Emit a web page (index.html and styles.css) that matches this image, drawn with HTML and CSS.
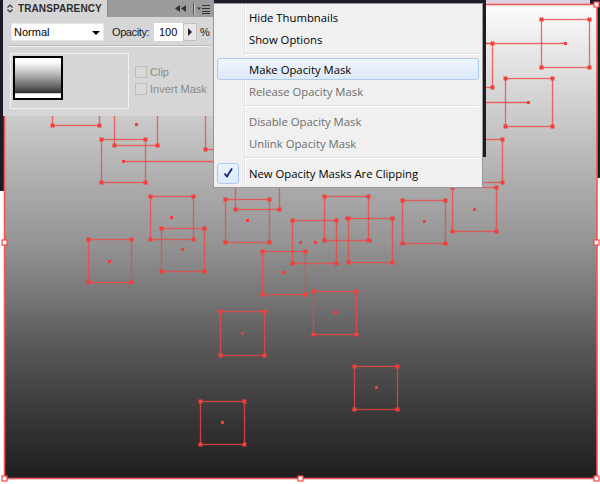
FILE: index.html
```html
<!DOCTYPE html>
<html>
<head>
<meta charset="utf-8">
<link rel="stylesheet" href="styles.css">
</head>
<body>
<div class="screen">
  <svg class="canvas" width="600" height="484" viewBox="0 0 600 484" xmlns="http://www.w3.org/2000/svg">
    <defs>
      <linearGradient id="art" x1="0" y1="0" x2="0" y2="1">
        <stop offset="0" stop-color="#fcfcfc"/>
        <stop offset="0.26" stop-color="#c6c6c6"/>
        <stop offset="0.39" stop-color="#aaaaaa"/>
        <stop offset="0.5" stop-color="#959595"/>
        <stop offset="0.63" stop-color="#737272"/>
        <stop offset="0.73" stop-color="#575555"/>
        <stop offset="0.88" stop-color="#363434"/>
        <stop offset="1" stop-color="#1f1d1e"/>
      </linearGradient>
      <rect id="h" x="-2" y="-2" width="4" height="4"/>
      <rect id="d" x="-1.5" y="-1.5" width="3" height="3"/>
      <rect id="bh" x="-2.5" y="-2.5" width="5" height="5"/>
    </defs>
    <rect x="0" y="0" width="600" height="4" fill="#1d1b28"/>
    <rect x="484" y="0" width="106" height="4" fill="#ddd2e4"/>
    <rect x="0" y="0" width="4" height="191" fill="#1d1b28"/>
    <rect x="597" y="0" width="3" height="178" fill="#1d1b28"/>
    <rect x="4" y="4" width="593" height="475" fill="url(#art)"/>
    <rect x="4.5" y="4.5" width="592.5" height="474" fill="none" stroke="#f35656" stroke-width="1.6"/>
    <g class="selbox">
      <rect x="541.5" y="19.5" width="48" height="48"/>
      <rect x="448.5" y="43.5" width="44" height="44"/>
      <rect x="505.5" y="78.5" width="47" height="48"/>
      <rect x="458.5" y="139.5" width="44" height="43"/>
      <rect x="452.5" y="187.5" width="44" height="44"/>
      <rect x="402.5" y="200.5" width="43" height="43"/>
      <rect x="52.5" y="81.5" width="47" height="44"/>
      <rect x="114.5" y="101.5" width="43" height="44"/>
      <rect x="101.5" y="139.5" width="44" height="43"/>
      <rect x="205.5" y="105.5" width="44" height="44"/>
      <rect x="150.5" y="196.5" width="43" height="43"/>
      <rect x="161.5" y="228.5" width="43" height="43"/>
      <rect x="88.5" y="239.5" width="43" height="43"/>
      <rect x="225.5" y="199.5" width="44" height="43"/>
      <rect x="235.5" y="165.5" width="44" height="44"/>
      <rect x="292.5" y="220.5" width="44" height="43"/>
      <rect x="324.5" y="196.5" width="44" height="44"/>
      <rect x="348.5" y="218.5" width="44" height="44"/>
      <rect x="262.5" y="251.5" width="43" height="43"/>
      <rect x="313.5" y="291.5" width="43" height="43"/>
      <rect x="220.5" y="311.5" width="44" height="44"/>
      <rect x="354.5" y="366.5" width="43" height="43"/>
      <rect x="200.5" y="401.5" width="44" height="43"/>
      <path d="M123 161.5H260M470 43.5H565M470 102.5H528"/>
    </g>
    <g class="handles">
      <use href="#h" x="541.5" y="19.5"/><use href="#h" x="589.5" y="19.5"/><use href="#h" x="541.5" y="67.5"/><use href="#h" x="589.5" y="67.5"/><use href="#d" x="565.5" y="43.5"/>
      <use href="#h" x="448.5" y="43.5"/><use href="#h" x="492.5" y="43.5"/><use href="#h" x="448.5" y="87.5"/><use href="#h" x="492.5" y="87.5"/>
      <use href="#h" x="505.5" y="78.5"/><use href="#h" x="552.5" y="78.5"/><use href="#h" x="505.5" y="126.5"/><use href="#h" x="552.5" y="126.5"/><use href="#d" x="528.5" y="102.5"/>
      <use href="#h" x="458.5" y="139.5"/><use href="#h" x="502.5" y="139.5"/><use href="#h" x="458.5" y="182.5"/><use href="#h" x="502.5" y="182.5"/>
      <use href="#h" x="452.5" y="187.5"/><use href="#h" x="496.5" y="187.5"/><use href="#h" x="452.5" y="231.5"/><use href="#h" x="496.5" y="231.5"/><use href="#d" x="474.5" y="209.5"/>
      <use href="#h" x="402.5" y="200.5"/><use href="#h" x="445.5" y="200.5"/><use href="#h" x="402.5" y="243.5"/><use href="#h" x="445.5" y="243.5"/><use href="#d" x="424.5" y="221.5"/>
      <use href="#h" x="52.5" y="125.5"/><use href="#h" x="99.5" y="125.5"/>
      <use href="#h" x="114.5" y="145.5"/><use href="#h" x="157.5" y="145.5"/><use href="#d" x="136.5" y="124.5"/>
      <use href="#h" x="101.5" y="139.5"/><use href="#h" x="145.5" y="139.5"/><use href="#h" x="101.5" y="182.5"/><use href="#h" x="145.5" y="182.5"/><use href="#d" x="123.5" y="161.5"/>
      <use href="#h" x="205.5" y="149.5"/>
      <use href="#h" x="150.5" y="196.5"/><use href="#h" x="193.5" y="196.5"/><use href="#h" x="150.5" y="239.5"/><use href="#h" x="193.5" y="239.5"/><use href="#d" x="171.5" y="217.5"/>
      <use href="#h" x="161.5" y="228.5"/><use href="#h" x="204.5" y="228.5"/><use href="#h" x="161.5" y="271.5"/><use href="#h" x="204.5" y="271.5"/><use href="#d" x="182.5" y="249.5"/>
      <use href="#h" x="88.5" y="239.5"/><use href="#h" x="131.5" y="239.5"/><use href="#h" x="88.5" y="282.5"/><use href="#h" x="131.5" y="282.5"/><use href="#d" x="109.5" y="261.5"/>
      <use href="#h" x="225.5" y="199.5"/><use href="#h" x="269.5" y="199.5"/><use href="#h" x="225.5" y="242.5"/><use href="#h" x="269.5" y="242.5"/><use href="#d" x="247.5" y="220.5"/>
      <use href="#h" x="235.5" y="209.5"/><use href="#h" x="279.5" y="209.5"/>
      <use href="#h" x="292.5" y="220.5"/><use href="#h" x="336.5" y="220.5"/><use href="#h" x="292.5" y="263.5"/><use href="#h" x="336.5" y="263.5"/><use href="#d" x="315.5" y="242.5"/><use href="#d" x="300.5" y="242.5"/>
      <use href="#h" x="324.5" y="196.5"/><use href="#h" x="368.5" y="196.5"/><use href="#h" x="324.5" y="240.5"/><use href="#h" x="368.5" y="240.5"/><use href="#d" x="346.5" y="218.5"/>
      <use href="#h" x="348.5" y="218.5"/><use href="#h" x="392.5" y="218.5"/><use href="#h" x="348.5" y="262.5"/><use href="#h" x="392.5" y="262.5"/><use href="#d" x="370.5" y="240.5"/>
      <use href="#h" x="262.5" y="251.5"/><use href="#h" x="305.5" y="251.5"/><use href="#h" x="262.5" y="294.5"/><use href="#h" x="305.5" y="294.5"/><use href="#d" x="283.5" y="272.5"/>
      <use href="#h" x="313.5" y="291.5"/><use href="#h" x="356.5" y="291.5"/><use href="#h" x="313.5" y="334.5"/><use href="#h" x="356.5" y="334.5"/><use href="#d" x="335.5" y="312.5"/>
      <use href="#h" x="220.5" y="311.5"/><use href="#h" x="264.5" y="311.5"/><use href="#h" x="220.5" y="355.5"/><use href="#h" x="264.5" y="355.5"/><use href="#d" x="242.5" y="333.5"/>
      <use href="#h" x="354.5" y="366.5"/><use href="#h" x="397.5" y="366.5"/><use href="#h" x="354.5" y="409.5"/><use href="#h" x="397.5" y="409.5"/><use href="#d" x="376.5" y="387.5"/>
      <use href="#h" x="200.5" y="401.5"/><use href="#h" x="244.5" y="401.5"/><use href="#h" x="200.5" y="444.5"/><use href="#h" x="244.5" y="444.5"/><use href="#d" x="222.5" y="422.5"/>
    </g>
    <g class="bhandles">
      <use href="#bh" x="4.5" y="242.5"/><use href="#bh" x="596.5" y="242.5"/><use href="#bh" x="300.5" y="478.5"/>
      <use href="#bh" x="4.5" y="478.5"/><use href="#bh" x="596.5" y="478.5"/><use href="#bh" x="596.5" y="4.5"/>
    </g>
    <rect x="483" y="0" width="3" height="157" fill="#1d1b28"/>
  </svg>

  <div class="panel">
    <div class="panel-head">
      <div class="tab">
        <svg class="tab-icon" width="6" height="9" viewBox="0 0 6 9"><path d="M0.5 3.5L3 1L5.5 3.5M0.5 5.5L3 8L5.5 5.5" fill="none" stroke="#333" stroke-width="1.2"/></svg>
        <span class="tab-title">TRANSPARENCY</span>
      </div>
      <div class="head-tools">
        <svg class="t-collapse" width="11" height="7" viewBox="0 0 11 7"><path d="M5 0V7L0 3.5Z M11 0V7L6 3.5Z" fill="#333"/></svg>
        <span class="head-sep"></span>
        <svg width="13" height="10" viewBox="0 0 13 10"><path d="M0 3.5H4L2 6Z" fill="#333"/><path d="M5 1.5H13M5 4.5H13M5 7.5H13M5 9.5H13" stroke="#333" stroke-width="1"/></svg>
      </div>
    </div>
    <div class="panel-body">
      <div class="row-top">
        <div class="select"><span>Normal</span><span class="caret"></span></div>
        <span class="lbl">Opacity:</span>
        <div class="num">100</div>
        <div class="stepper"><span class="tri"></span></div>
        <span class="pct">%</span>
      </div>
      <div class="rule"></div>
      <div class="row-mask">
        <div class="frame"><div class="thumb"></div></div>
        <div class="checks">
          <label class="chk"><span class="box"></span>Clip</label>
          <label class="chk"><span class="box"></span>Invert Mask</label>
        </div>
      </div>
    </div>
  </div>

  <div class="menu">
    <div class="item"><span class="gut"></span>Hide Thumbnails</div>
    <div class="item"><span class="gut"></span>Show Options</div>
    <div class="sep"></div>
    <div class="item hot"><span class="gut"></span>Make Opacity Mask</div>
    <div class="item off"><span class="gut"></span>Release Opacity Mask</div>
    <div class="sep"></div>
    <div class="item off"><span class="gut"></span>Disable Opacity Mask</div>
    <div class="item off"><span class="gut"></span>Unlink Opacity Mask</div>
    <div class="sep"></div>
    <div class="item"><span class="gut checked"><svg width="12" height="12" viewBox="0 0 12 12"><path d="M2.5 6.5L5 9.5L10 1.5" fill="none" stroke="#13237a" stroke-width="1.8"/></svg></span>New Opacity Masks Are Clipping</div>
  </div>
</div>
</body>
</html>
```

FILE: styles.css
```css
html, body {
  margin: 0;
  padding: 0;
  background: #fff;
}

.screen {
  position: relative;
  width: 600px;
  height: 484px;
  overflow: hidden;
}

.canvas {
  display: block;
}

.selbox {
  fill: none;
  stroke: #f04646;
  stroke-opacity: 0.8;
  stroke-width: 1.3;
}

.handles {
  fill: #f43e3e;
}

.bhandles {
  fill: #fff;
  stroke: #f04848;
  stroke-width: 1.2;
}

/* Transparency panel */
.panel {
  position: absolute;
  left: 3px;
  top: 0;
  width: 211px;
  height: 116px;
  background: #d6d6d6;
  font-family: "Liberation Sans", Arial, sans-serif;
  font-size: 11px;
  color: #1a1a1a;
  display: flex;
  flex-direction: column;
}

.panel-head {
  height: 17px;
  display: flex;
  background: #9c9c9c;
}

.tab {
  width: 105px;
  background: #d6d6d6;
  border-right: 1px solid #8a8a8a;
  display: flex;
  align-items: center;
  gap: 5px;
  padding-left: 4px;
  box-sizing: border-box;
}

.tab-icon {
  display: block;
}

.tab-title {
  font-weight: bold;
  font-size: 10px;
  color: #2c2c2c;
  letter-spacing: 0.1px;
}

.head-tools {
  flex: 1;
  display: flex;
  align-items: center;
  justify-content: flex-end;
  padding-right: 4px;
}

.head-tools svg {
  display: block;
}

.t-collapse {
  margin-right: 7px;
}

.head-sep {
  width: 1px;
  height: 12px;
  background: #555;
  box-shadow: 1px 0 0 #c4c4c4;
  margin-right: 3px;
}

.panel-body {
  padding: 6px 0 0 8px;
  display: flex;
  flex-direction: column;
}

.row-top {
  display: flex;
  align-items: center;
  height: 18px;
}

.select {
  width: 93px;
  height: 18px;
  box-sizing: border-box;
  background: #fff;
  border: 1px solid #e6e6e6;
  display: flex;
  align-items: center;
  justify-content: space-between;
  padding: 0 3px 0 2px;
  color: #000;
}

.caret {
  width: 0;
  height: 0;
  border-left: 4px solid transparent;
  border-right: 4px solid transparent;
  border-top: 4px solid #000;
  margin-top: 2px;
}

.lbl {
  margin-left: 8px;
  width: 39px;
  letter-spacing: -0.4px;
  white-space: nowrap;
  color: #1a1a1a;
}

.num {
  margin-left: 3px;
  width: 29px;
  height: 18px;
  box-sizing: border-box;
  background: #fff;
  padding-left: 5px;
  line-height: 18px;
  color: #000;
}

.stepper {
  width: 14px;
  height: 18px;
  box-sizing: border-box;
  background: #e8e8e8;
  border: 1px solid #c2c2c2;
  display: flex;
  align-items: center;
  justify-content: center;
}

.tri {
  width: 0;
  height: 0;
  border-top: 4px solid transparent;
  border-bottom: 4px solid transparent;
  border-left: 4px solid #222;
}

.pct {
  margin-left: 3px;
}

.rule {
  margin: 4px 4px 0 -4px;
  height: 0;
  border-top: 1px solid #b9b9b9;
  border-bottom: 1px solid #f4f4f4;
}

.row-mask {
  display: flex;
  margin-top: 6px;
  margin-left: -1px;
}

.frame {
  width: 119px;
  height: 56px;
  box-sizing: border-box;
  border: 1px solid #f2f2f2;
  padding: 2px;
}

.thumb {
  width: 50px;
  height: 44px;
  box-sizing: border-box;
  border: 2px solid #000;
  background: linear-gradient(#fff 0%, #fff 10%, #b9b9b9 40%, #5a5a5a 75%, #2a2a2a 88%, #fff 89%);
}

.checks {
  margin-left: 6px;
  padding-top: 13px;
  display: flex;
  flex-direction: column;
  gap: 5px;
}

.chk {
  display: flex;
  align-items: center;
  gap: 3px;
  color: #8b8b8b;
  height: 12px;
}

.box {
  width: 12px;
  height: 12px;
  box-sizing: border-box;
  border: 1px solid #bdbdbd;
  background: #d9d9d9;
}

/* Context menu */
.menu {
  position: absolute;
  left: 213px;
  top: 3px;
  width: 270px;
  height: 185px;
  box-sizing: border-box;
  border: 1px solid #979797;
  padding: 2px 3px 3px 3px;
  background:
    linear-gradient(to right, transparent 30px, #e2e3e3 30px, #e2e3e3 31px, #fff 31px, #fff 32px, transparent 32px),
    #f0f0f0;
  font-family: "Open Sans", "Noto Sans", sans-serif;
  font-size: 11.3px;
  color: #000;
  display: flex;
  flex-direction: column;
}

.item {
  height: 22px;
  display: flex;
  align-items: center;
  box-sizing: border-box;
  border-radius: 3px;
}

.gut {
  width: 22px;
  height: 21px;
  margin-right: 10px;
  box-sizing: border-box;
  display: flex;
  align-items: center;
  justify-content: center;
  border-radius: 3px;
}

.gut.checked {
  background: linear-gradient(#eaf3fd, #dbe9f9);
  border: 1px solid #a8caf2;
}

.gut svg {
  display: block;
}

.item.hot {
  border: 1px solid #aecbee;
  background: linear-gradient(#eef5fd, #dde9f8);
}

.item.hot .gut {
  width: 21px;
}

.item.off {
  color: #6d6d6d;
}

.sep {
  height: 8px;
  margin-left: 27px;
  box-sizing: border-box;
  padding-top: 3px;
}

.sep::before {
  content: "";
  display: block;
  height: 1px;
  background: #e0e0e0;
  border-bottom: 1px solid #fff;
}
```
